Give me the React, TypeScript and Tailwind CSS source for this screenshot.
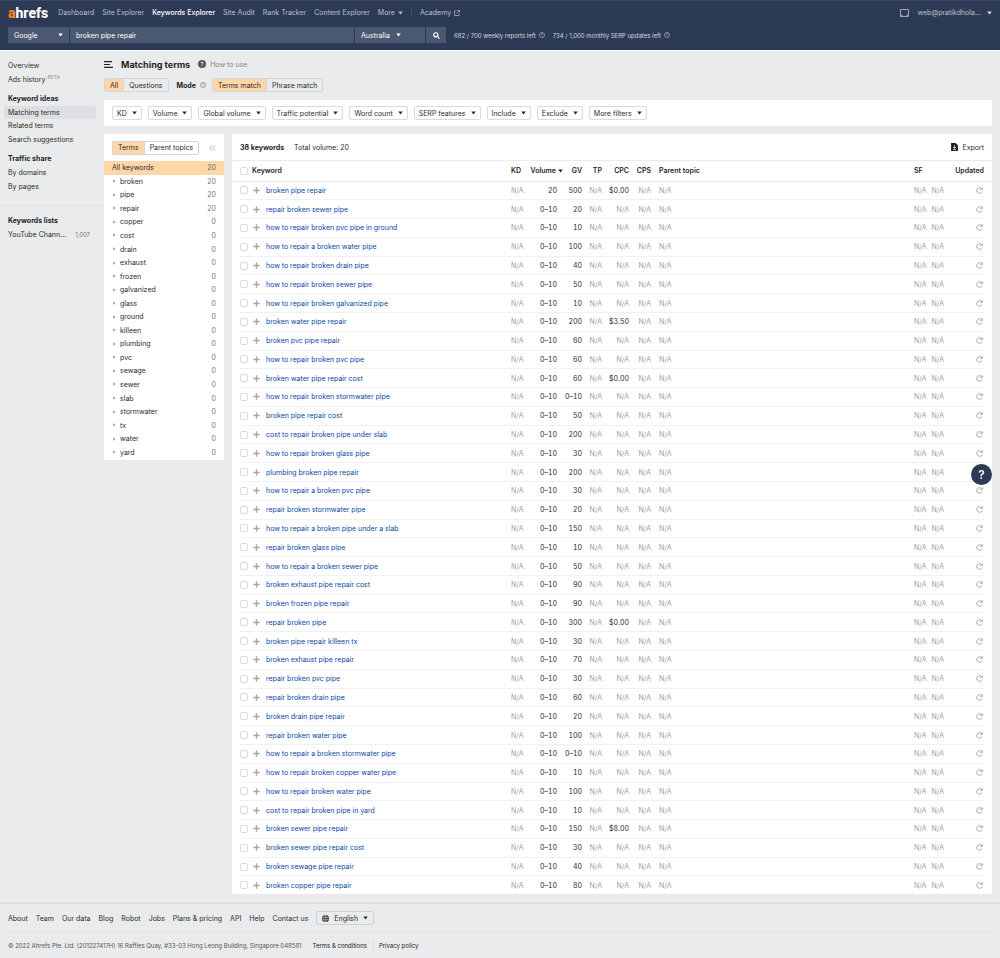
import type { ReactNode } from "react";
import { clsx } from "clsx";

type Row = {
  keyword: string;
  volume?: string;
  gv: string;
  cpc?: string;
};

const NAV_ITEMS = [
  "Dashboard",
  "Site Explorer",
  "Keywords Explorer",
  "Site Audit",
  "Rank Tracker",
  "Content Explorer",
];

const FILTERS = [
  "KD",
  "Volume",
  "Global volume",
  "Traffic potential",
  "Word count",
  "SERP features",
  "Include",
  "Exclude",
  "More filters",
];

const TERMS: [string, number][] = [
  ["broken", 20],
  ["pipe", 20],
  ["repair", 20],
  ["copper", 0],
  ["cost", 0],
  ["drain", 0],
  ["exhaust", 0],
  ["frozen", 0],
  ["galvanized", 0],
  ["glass", 0],
  ["ground", 0],
  ["killeen", 0],
  ["plumbing", 0],
  ["pvc", 0],
  ["sewage", 0],
  ["sewer", 0],
  ["slab", 0],
  ["stormwater", 0],
  ["tx", 0],
  ["water", 0],
  ["yard", 0],
];

const ROWS: Row[] = [
  { keyword: "broken pipe repair", volume: "20", gv: "500", cpc: "$0.00" },
  { keyword: "repair broken sewer pipe", gv: "20" },
  { keyword: "how to repair broken pvc pipe in ground", gv: "10" },
  { keyword: "how to repair a broken water pipe", gv: "100" },
  { keyword: "how to repair broken drain pipe", gv: "40" },
  { keyword: "how to repair broken sewer pipe", gv: "50" },
  { keyword: "how to repair broken galvanized pipe", gv: "10" },
  { keyword: "broken water pipe repair", gv: "200", cpc: "$3.50" },
  { keyword: "broken pvc pipe repair", gv: "60" },
  { keyword: "how to repair broken pvc pipe", gv: "60" },
  { keyword: "broken water pipe repair cost", gv: "60", cpc: "$0.00" },
  { keyword: "how to repair broken stormwater pipe", gv: "0–10" },
  { keyword: "broken pipe repair cost", gv: "50" },
  { keyword: "cost to repair broken pipe under slab", gv: "200" },
  { keyword: "how to repair broken glass pipe", gv: "30" },
  { keyword: "plumbing broken pipe repair", gv: "200" },
  { keyword: "how to repair a broken pvc pipe", gv: "30" },
  { keyword: "repair broken stormwater pipe", gv: "20" },
  { keyword: "how to repair a broken pipe under a slab", gv: "150" },
  { keyword: "repair broken glass pipe", gv: "10" },
  { keyword: "how to repair a broken sewer pipe", gv: "50" },
  { keyword: "broken exhaust pipe repair cost", gv: "90" },
  { keyword: "broken frozen pipe repair", gv: "90" },
  { keyword: "repair broken pipe", gv: "300", cpc: "$0.00" },
  { keyword: "broken pipe repair killeen tx", gv: "30" },
  { keyword: "broken exhaust pipe repair", gv: "70" },
  { keyword: "repair broken pvc pipe", gv: "30" },
  { keyword: "repair broken drain pipe", gv: "60" },
  { keyword: "broken drain pipe repair", gv: "20" },
  { keyword: "repair broken water pipe", gv: "100" },
  { keyword: "how to repair a broken stormwater pipe", gv: "0–10" },
  { keyword: "how to repair broken copper water pipe", gv: "10" },
  { keyword: "how to repair broken water pipe", gv: "100" },
  { keyword: "cost to repair broken pipe in yard", gv: "10" },
  { keyword: "broken sewer pipe repair", gv: "150", cpc: "$8.00" },
  { keyword: "broken sewer pipe repair cost", gv: "30" },
  { keyword: "broken sewage pipe repair", gv: "40" },
  { keyword: "broken copper pipe repair", gv: "80" },
];

const FOOTER_LINKS = [
  "About",
  "Team",
  "Our data",
  "Blog",
  "Robot",
  "Jobs",
  "Plans & pricing",
  "API",
  "Help",
  "Contact us",
];

function Caret({ className }: { className?: string }) {
  return (
    <svg
      viewBox="0 0 6 4"
      className={clsx("h-1 w-[5px] shrink-0", className)}
      fill="currentColor"
      aria-hidden="true"
    >
      <path d="M.3.2h5.400L3 3.700z" />
    </svg>
  );
}

function HelpIcon({ className }: { className?: string }) {
  return (
    <svg
      viewBox="0 0 14 14"
      className={clsx("size-1.5 shrink-0", className)}
      fill="none"
      stroke="currentColor"
      strokeWidth="2"
      aria-hidden="true"
    >
      <circle cx="7" cy="7" r="6" />
      <path d="M5.1 5.6c0-1.2.8-1.9 1.9-1.9s1.9.7 1.9 1.7c0 1.3-1.8 1.3-1.8 2.7M7.1 9.2v1.3" />
    </svg>
  );
}

function Checkbox({ label }: { label: string }) {
  return (
    <input
      type="checkbox"
      aria-label={label}
      className="block size-2 appearance-none rounded-[2px] border border-[#d9dbdd] bg-white checked:bg-[#ff8800]"
    />
  );
}

function Segmented({ options, label }: { options: string[]; label?: string }) {
  return (
    <div
      role="group"
      aria-label={label}
      className="flex h-3.5 overflow-hidden rounded-[2px] border border-[#d3d5d8]"
    >
      {options.map((option, i) => (
        <button
          key={option}
          type="button"
          aria-pressed={i === 0}
          className={clsx(
            "px-[5px] whitespace-nowrap",
            i === 0 ? "bg-[#ffd6a8]" : "border-l border-[#d3d5d8]",
          )}
        >
          {option}
        </button>
      ))}
    </div>
  );
}

function Header() {
  return (
    <header className="border-t border-b border-t-[#3b4863] border-b-[#f7f8f9] bg-[#2d3a56] px-2 pb-[7px] text-[#b9c0cc]">
      <div className="mb-[3px] flex h-[23px] items-center">
        <a
          href="#"
          className="mr-2.5 font-['Roboto',sans-serif] text-[14px] leading-3 font-extrabold text-white"
        >
          <span className="text-[#ff8c0a]">a</span>hrefs
        </a>
        <nav aria-label="Main" className="flex flex-1 items-center gap-2 whitespace-nowrap">
          {NAV_ITEMS.map((item) => (
            <a
              key={item}
              href="#"
              className={clsx(item === "Keywords Explorer" && "font-medium text-white")}
            >
              {item}
            </a>
          ))}
          <button type="button" className="flex items-center gap-[3px]">
            More <Caret />
          </button>
          <a href="#" className="flex items-center gap-[3px] border-l border-[#43506b] pl-2">
            Academy
            <svg viewBox="0 0 12 12" className="size-1.5" fill="none" stroke="currentColor" strokeWidth="1.4" aria-hidden="true">
              <path d="M5 2H1v9h9V7M7 1h4v4M11 1 5.5 6.5" />
            </svg>
          </a>
        </nav>
        <svg viewBox="0 0 18 16" className="mr-2 h-2 w-[9px]" fill="none" stroke="currentColor" strokeWidth="1.6" aria-hidden="true">
          <path d="M1 1h16v14H1zM2 12.5h3.5M12.5 12.5H16" />
        </svg>
        <button type="button" className="flex items-center gap-1.5">
          web@pratikdhola… <Caret className="text-[#dfe3ea]" />
        </button>
      </div>
      <form className="flex h-4 items-center" onSubmit={(e) => e.preventDefault()}>
        <div className="flex h-full w-[438px] gap-px text-white">
          <div className="relative w-[61px] bg-[#4b5871]">
            <select aria-label="Search engine" className="block h-full w-full appearance-none px-1.5">
              <option>Google</option>
              <option>YouTube</option>
            </select>
            <Caret className="pointer-events-none absolute top-1.5 right-1.5" />
          </div>
          <input
            aria-label="Keywords"
            defaultValue="broken pipe repair"
            className="min-w-0 flex-1 bg-[#4b5871] px-1.5"
          />
          <div className="relative w-[70px] bg-[#4b5871]">
            <select aria-label="Country" className="block h-full w-full appearance-none px-1.5">
              <option>Australia</option>
              <option>United States</option>
            </select>
            <Caret className="pointer-events-none absolute top-1.5 right-6" />
          </div>
          <button type="submit" aria-label="Search" className="flex w-5 items-center justify-center bg-[#4b5871]">
            <svg viewBox="0 0 12 12" className="size-[7px]" fill="none" stroke="currentColor" strokeWidth="2" aria-hidden="true">
              <circle cx="4.8" cy="4.8" r="3.5" />
              <path d="m7.5 7.5 3.8 3.8" />
            </svg>
          </button>
        </div>
        <p className="ml-2 flex items-center gap-[3px] text-[6px] text-[#d3d7df]">
          682 / 700 weekly reports left <HelpIcon className="text-[#8d97aa]" />
        </p>
        <p className="ml-2 flex items-center gap-[3px] text-[6px] text-[#d3d7df]">
          734 / 1,000 monthly SERP updates left <HelpIcon className="text-[#8d97aa]" />
        </p>
      </form>
    </header>
  );
}

function SideLink({ children, active }: { children: ReactNode; active?: boolean }) {
  return (
    <li className={clsx("flex items-center rounded-[2px] px-1", active && "bg-[#dddfe2]")}>
      <a href="#" className="flex w-full">
        {children}
      </a>
    </li>
  );
}

function SideHeading({ children }: { children: ReactNode }) {
  return <li className="flex items-center px-1 font-bold text-[#1f1f1f]">{children}</li>;
}

function Sidebar() {
  return (
    <aside className="w-[104px] shrink-0 pt-2">
      <nav aria-label="Keywords Explorer" className="flex flex-col gap-1.5 pr-2 pb-3 pl-1">
        <ul className="grid min-h-[27px] auto-rows-fr">
          <SideLink>Overview</SideLink>
          <SideLink>
            Ads history <span className="-mt-0.5 ml-0.5 text-[5px] text-[#999]">BETA</span>
          </SideLink>
        </ul>
        <ul className="grid min-h-[54px] auto-rows-fr">
          <SideHeading>Keyword ideas</SideHeading>
          <SideLink active>Matching terms</SideLink>
          <SideLink>Related terms</SideLink>
          <SideLink>Search suggestions</SideLink>
        </ul>
        <ul className="grid min-h-[41px] auto-rows-fr">
          <SideHeading>Traffic share</SideHeading>
          <SideLink>By domains</SideLink>
          <SideLink>By pages</SideLink>
        </ul>
      </nav>
      <ul className="grid min-h-9 auto-rows-fr border-t border-[#dddfe1] pt-2 pr-2 pl-1">
        <SideHeading>Keywords lists</SideHeading>
        <SideLink>
          <span className="flex-1">YouTube Chann…</span>
          <span className="pr-0.5 text-[6px] text-[#777]">1,007</span>
        </SideLink>
      </ul>
    </aside>
  );
}

function TermsPanel() {
  return (
    <section className="w-[120px] shrink-0 bg-white pb-px">
      <div className="flex h-[27px] items-center justify-between px-2">
        <Segmented label="Group by" options={["Terms", "Parent topics"]} />
        <button type="button" aria-label="Collapse panel" className="text-[#999]">
          <svg viewBox="0 0 14 12" className="h-1.5 w-[7px]" fill="none" stroke="currentColor" strokeWidth="1.4" aria-hidden="true">
            <path d="M6.5 1 1.5 6l5 5M12.5 1 7.5 6l5 5" />
          </svg>
        </button>
      </div>
      <ul className="grid min-h-[298px] auto-rows-fr">
        <li className="flex items-center justify-between bg-[#ffd6a8] px-2">
          <a href="#">All keywords</a>
          <span className="text-[#666]">20</span>
        </li>
        {TERMS.map(([term, count]) => (
          <li key={term} className="flex items-center px-2">
            <svg viewBox="0 0 4 4" className="mr-1 size-1" fill="#aaa" aria-hidden="true">
              <path d="M1 .3 3.800 2 1 3.700z" />
            </svg>
            <a href="#" className="flex-1">
              {term}
            </a>
            <span className="text-[#777]">{count}</span>
          </li>
        ))}
      </ul>
    </section>
  );
}

function NA() {
  return <span className="text-[#a0a0a0]">N/A</span>;
}

function KeywordsTable() {
  return (
    <table className="h-[733px] w-full table-fixed text-right whitespace-nowrap tabular-nums">
      <colgroup>
        <col className="w-2" />
        <col className="w-3" />
        <col className="w-3.5" />
        <col className="w-[245px]" />
        <col className="w-3" />
        <col className="w-10" />
        <col className="w-[19px]" />
        <col className="w-5" />
        <col className="w-[27px]" />
        <col className="w-[22px]" />
        <col />
        <col className="w-3" />
        <col className="w-[18px]" />
        <col className="w-10" />
        <col className="w-2" />
      </colgroup>
      <thead>
        <tr className="h-5 border-b border-[#e9ebec] text-[#1f1f1f] [&>th]:font-semibold">
          <td />
          <th>
            <Checkbox label="Select all keywords" />
          </th>
          <th colSpan={2} className="text-left">Keyword</th>
          <th className="text-left">KD</th>
          <th>
            <span className="flex items-center justify-end gap-0.5">
              Volume <Caret />
            </span>
          </th>
          <th>GV</th>
          <th>TP</th>
          <th>CPC</th>
          <th>CPS</th>
          <th className="pl-2 text-left">Parent topic</th>
          <th className="text-left">SF</th>
          <td />
          <th>Updated</th>
          <td />
        </tr>
      </thead>
      <tbody className="[&>tr:last-child>td]:border-0">
        {ROWS.map((row) => (
          <tr
            key={row.keyword}
            className="[&>td]:border-b [&>td]:border-[#f0f1f2] [&>td:first-child]:border-0 [&>td:last-child]:border-0"
          >
            <td />
            <td>
              <Checkbox label={`Select ${row.keyword}`} />
            </td>
            <td>
              <button type="button" aria-label={`Add ${row.keyword} to list`} className="flex w-[9px] justify-center text-[#a6a6a6]">
                <svg viewBox="0 0 7 7" className="size-[7px]" fill="none" stroke="currentColor" strokeWidth="1.4" aria-hidden="true">
                  <path d="M3.5 .3v6.4M.3 3.5h6.4" />
                </svg>
              </button>
            </td>
            <td className="text-left">
              <a href="#" className="text-[#0a47a3]">
                {row.keyword}
              </a>
            </td>
            <td><NA /></td>
            <td className="pr-1.5">{row.volume ?? "0–10"}</td>
            <td>{row.gv}</td>
            <td><NA /></td>
            <td>{row.cpc ?? <NA />}</td>
            <td><NA /></td>
            <td className="pl-2 text-left"><NA /></td>
            <td><NA /></td>
            <td><NA /></td>
            <td>
              <button type="button" aria-label={`Update ${row.keyword}`} className="ml-auto block pr-px text-[#a0a0a0]">
                <svg viewBox="0 0 14 14" className="size-[7px]" fill="none" stroke="currentColor" strokeWidth="1.8" aria-hidden="true">
                  <path d="M11.4 3.400A5.600 5.600 0 1 0 12.300 9M12.700 .5v4.300H8.400" />
                </svg>
              </button>
            </td>
            <td />
          </tr>
        ))}
      </tbody>
    </table>
  );
}

function Footer() {
  return (
    <footer className="border-t-2 border-[#dddfe1] px-2">
      <div className="flex h-[29px] items-center gap-2 border-b border-[#dfe1e3]">
        {FOOTER_LINKS.map((link) => (
          <a key={link} href="#">
            {link}
          </a>
        ))}
        <div className="relative flex h-3.5 items-center rounded-[2px] border border-[#cfd1d4]">
          <svg viewBox="0 0 16 16" className="pointer-events-none absolute left-[5px] size-[7px]" aria-hidden="true">
            <circle cx="8" cy="8" r="8" fill="#333" />
            <path d="M0 5.5h16M0 10.5h16M8 0v16M8 0c-5 4-5 12 0 16M8 0c5 4 5 12 0 16" stroke="#e9ebec" strokeWidth=".9" fill="none" />
          </svg>
          <select aria-label="Language" className="block h-full w-14 appearance-none pl-[17px]">
            <option>English</option>
            <option>Deutsch</option>
          </select>
          <Caret className="pointer-events-none absolute right-[5px]" />
        </div>
      </div>
      <div className="flex h-6 items-center text-[6px] text-[#555]">
        <p className="mr-[11px]">
          © 2022 Ahrefs Pte. Ltd. (201227417H) 16 Raffles Quay, #33-03 Hong Leong Building, Singapore 048581
        </p>
        <a href="#" className="mr-[5px] border-r border-[#dadcde] pr-1.5 text-[#222]">Terms &amp; conditions</a>
        <a href="#" className="text-[#222]">Privacy policy</a>
      </div>
    </footer>
  );
}

export default function App() {
  return (
    <div className="min-h-screen bg-[#e9ebec] font-['Inter','Liberation_Sans',sans-serif] text-[7px] leading-[9px] text-[#2b2b2b]">
      <Header />
      <div className="flex">
        <Sidebar />
        <main className="min-w-0 flex-1 pr-2 pb-2">
          <div className="flex h-[26px] items-center">
            <button type="button" aria-label="Toggle sidebar" className="mr-2">
              <svg viewBox="0 0 9 7" className="h-[7px] w-[9px]" stroke="#222" strokeWidth="1.2" aria-hidden="true">
                <path d="M0 .6h8M0 3.5h6M0 6.4h9" />
              </svg>
            </button>
            <h1 className="mr-2 text-[9px] font-bold text-[#1f1f1f]">Matching terms</h1>
            <a href="#" className="flex items-center gap-1 text-[#888]">
              <svg viewBox="0 0 14 14" className="size-2" aria-hidden="true">
                <circle cx="7" cy="7" r="7" fill="#555" />
                <path d="M5 5.5c0-1.2.9-1.9 2-1.9s2 .7 2 1.7C9 6.7 7.1 6.6 7.1 8M7.1 9.4v1.4" fill="none" stroke="#fff" strokeWidth="1.5" />
              </svg>
              How to use
            </a>
          </div>
          <div className="mt-px mb-2 flex items-center">
            <Segmented label="Keyword type" options={["All", "Questions"]} />
            <span className="mr-1 ml-2 font-bold text-[#1f1f1f]">Mode</span>
            <HelpIcon className="mr-1.5 text-[#999]" />
            <Segmented label="Match mode" options={["Terms match", "Phrase match"]} />
          </div>
          <div className="mb-2 flex min-h-[26px] flex-wrap items-center gap-1.5 bg-white px-2">
            {FILTERS.map((filter) => (
              <button
                key={filter}
                type="button"
                aria-haspopup="true"
                className="flex h-3.5 items-center gap-[5px] rounded-[2px] border border-[#d9dbdd] px-1 whitespace-nowrap"
              >
                {filter} <Caret />
              </button>
            ))}
          </div>
          <div className="flex items-start gap-2">
            <TermsPanel />
            <section className="min-w-0 flex-1 bg-white">
              <div className="flex h-[27px] items-center border-b border-[#e9ebec] px-2">
                <h2 className="mr-2.5 font-bold text-[#1f1f1f]">38 keywords</h2>
                <span>Total volume: 20</span>
                <button type="button" className="ml-auto flex items-center gap-1">
                  <svg viewBox="0 0 12 14" className="h-2 w-[7px]" aria-hidden="true">
                    <path d="M0 0h8l4 4v10H0z" fill="#222" />
                    <path d="M6 4v5M3.5 7 6 9.5 8.5 7M3.5 11.5h5" stroke="#fff" strokeWidth="1.3" fill="none" />
                  </svg>
                  Export
                </button>
              </div>
              <KeywordsTable />
            </section>
          </div>
        </main>
      </div>
      <Footer />
      <button
        type="button"
        aria-label="Help"
        className="fixed right-2 bottom-[473px] flex size-[21px] items-center justify-center rounded-full bg-[#2d3a56] text-[12px] font-semibold text-white"
      >
        ?
      </button>
    </div>
  );
}
